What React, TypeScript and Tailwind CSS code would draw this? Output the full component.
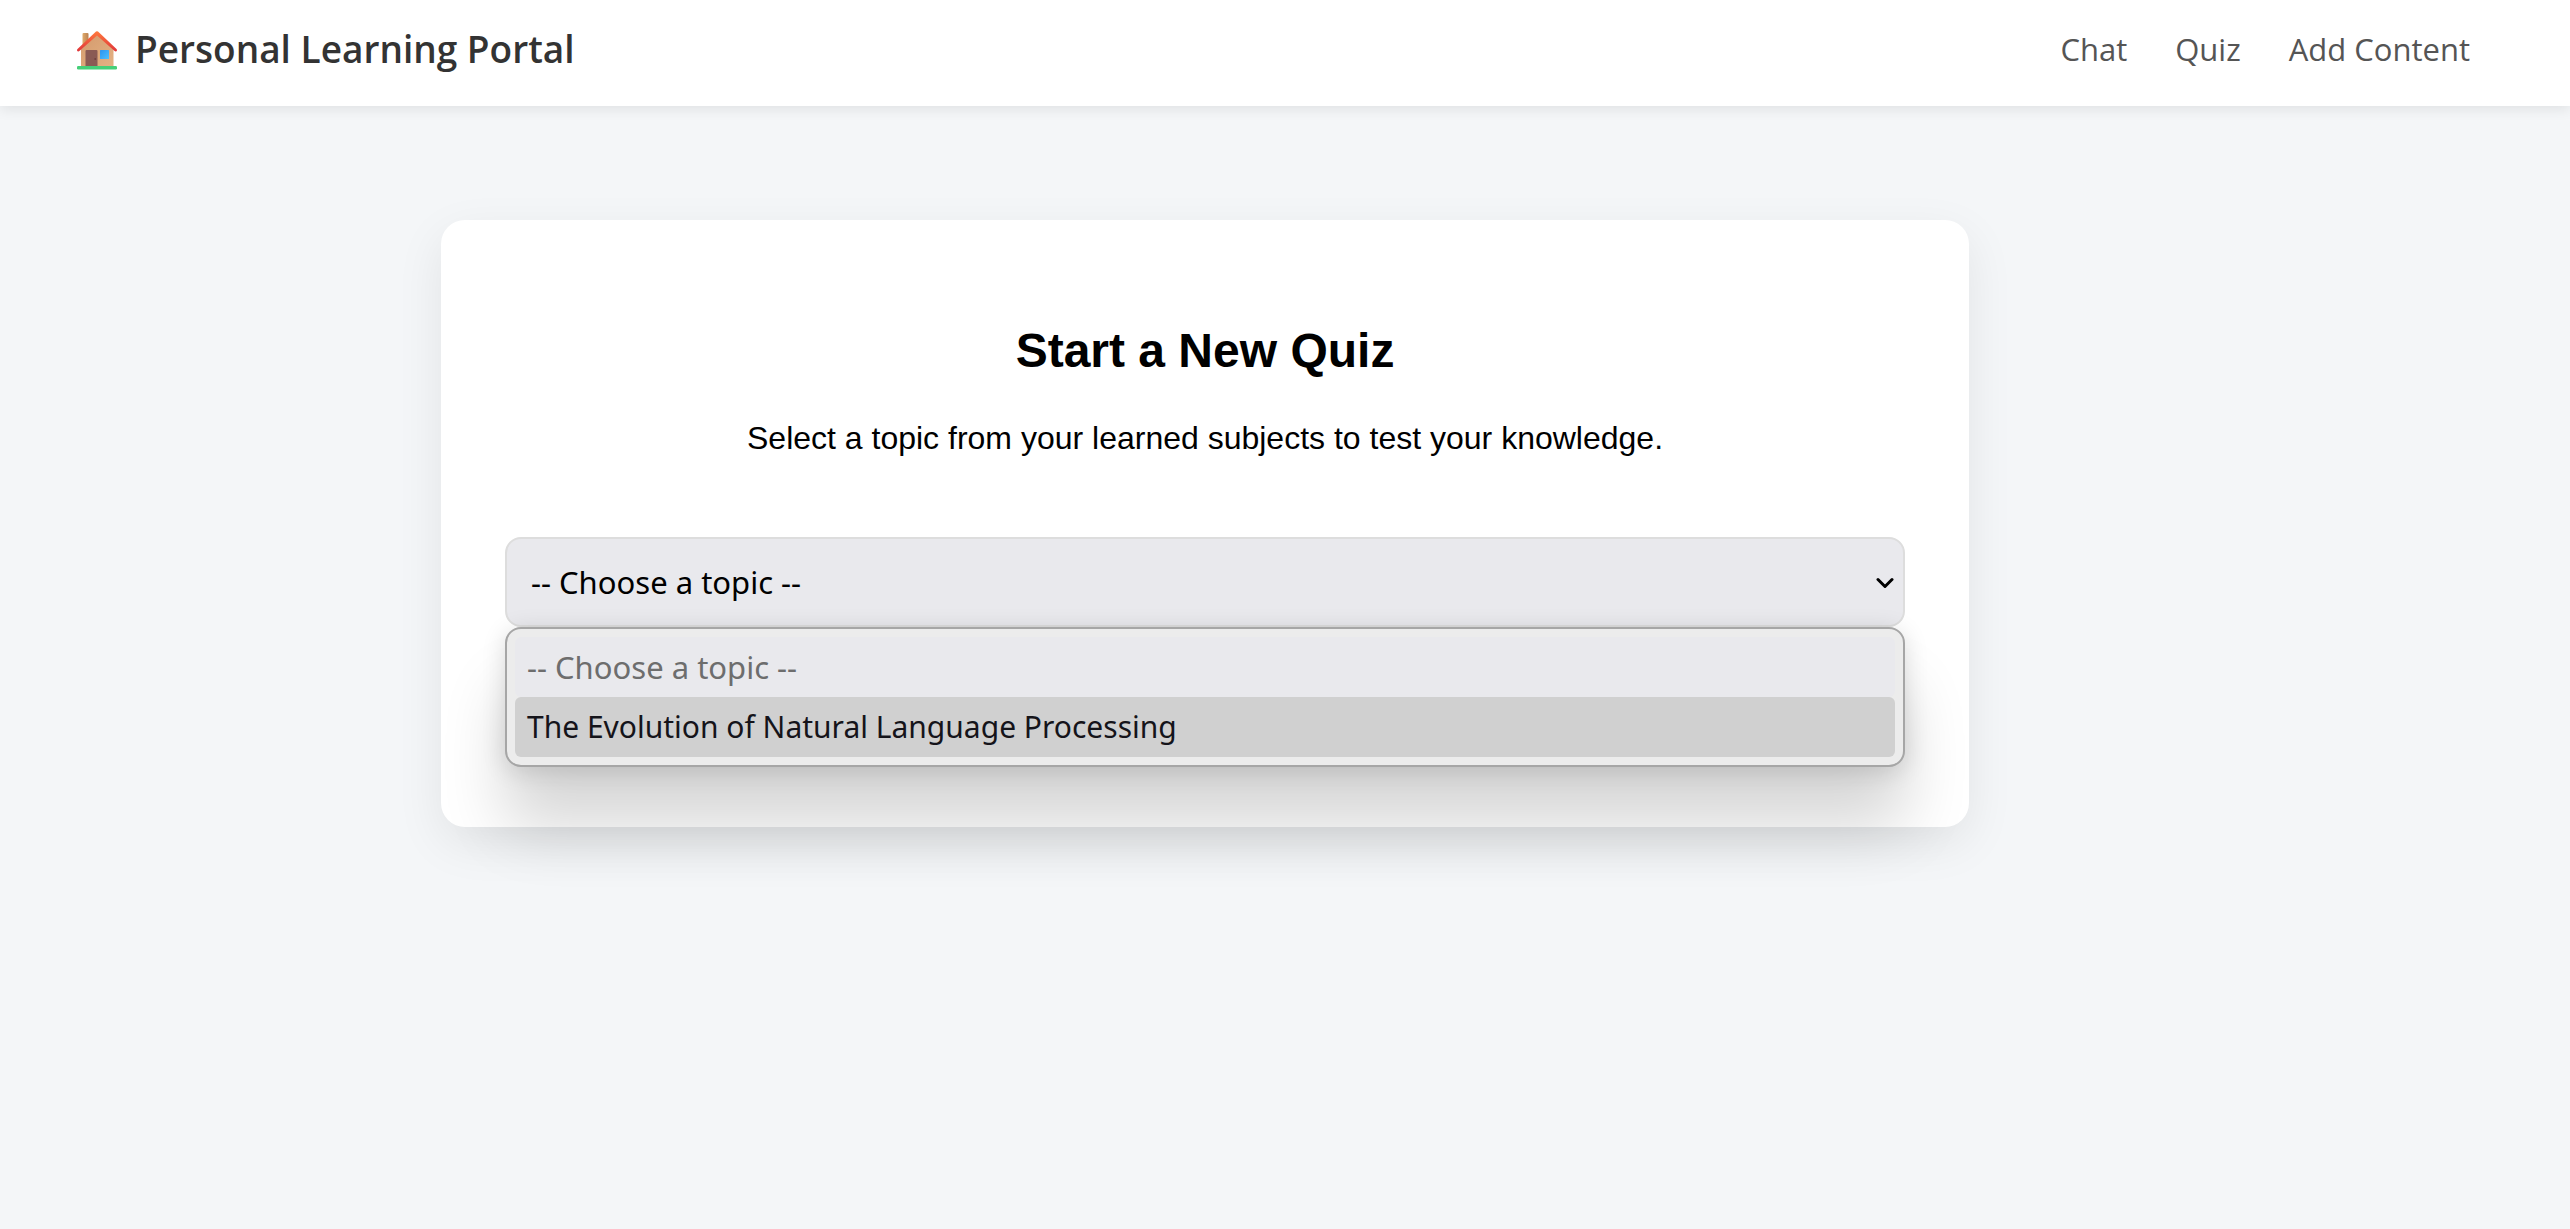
import { useState } from 'react';

const PLACEHOLDER = '-- Choose a topic --';
const TOPICS = ['The Evolution of Natural Language Processing'];
const NAV = ['Chat', 'Quiz', 'Add Content'];

function HouseIcon() {
  return (
    <svg width="40" height="42" viewBox="0 0 40 42" aria-hidden="true" className="shrink-0">
      <defs>
        <linearGradient id="wall" x1="0" y1="0" x2="1" y2="1">
          <stop offset="0" stopColor="#d49a6c" />
          <stop offset="1" stopColor="#e3b184" />
        </linearGradient>
        <linearGradient id="chimney" x1="0" y1="0" x2="1" y2="0">
          <stop offset="0" stopColor="#e0ab6c" />
          <stop offset="1" stopColor="#b98152" />
        </linearGradient>
        <linearGradient id="roof" x1="0" y1="0" x2="0" y2="1">
          <stop offset="0" stopColor="#ff7a3d" />
          <stop offset="1" stopColor="#e0353a" />
        </linearGradient>
        <linearGradient id="pane" x1="0" y1="0" x2="1" y2="1">
          <stop offset="0" stopColor="#2d93ee" />
          <stop offset="1" stopColor="#4cc0ff" />
        </linearGradient>
      </defs>
      <path d="M5.5 6a1 1 0 0 1 1-1h4a1 1 0 0 1 1 1v14h-6z" fill="url(#chimney)" />
      <path d="M4 21 20 6l16.500 15v17.500H4z" fill="url(#wall)" />
      <rect x="8.500" y="22" width="12" height="17" rx="1" fill="#8a5a54" />
      <circle cx="18.200" cy="31" r="0.900" fill="#6b403d" />
      <rect x="23" y="22" width="9" height="9" rx="0.600" fill="url(#pane)" />
      <path
        d="M19 3.600a1.500 1.500 0 0 1 2 0L39.500 21c.700.700.600 1.900-.200 2.300-.500.300-1.200.200-1.700-.200L20 7.600 2.400 23.100c-.500.400-1.200.500-1.700.200-.800-.400-.900-1.600-.200-2.300z"
        fill="url(#roof)"
      />
      <rect x="0" y="38" width="40" height="3.500" rx="1.200" fill="#45cf78" />
    </svg>
  );
}

function Header() {
  return (
    <header className="flex items-center justify-between bg-white pt-6 pr-[100px] pb-8 pl-[77px] font-['Open_Sans',sans-serif] shadow-[0_4px_12px_rgba(0,0,0,0.08)]">
      <h1 className="flex items-center gap-[18px] text-[37px] leading-[50px] font-semibold text-[#333333]">
        <HouseIcon />
        Personal Learning Portal
      </h1>
      <nav className="flex gap-12 text-[31px] leading-[42px] text-[#555555]">
        {NAV.map((label) => (
          <a key={label} href="#">
            {label}
          </a>
        ))}
      </nav>
    </header>
  );
}

function TopicPicker() {
  const [topic, setTopic] = useState('');
  return (
    <div className="relative">
      <select
        aria-label="Quiz topic"
        value={topic}
        onChange={(e) => setTopic(e.target.value)}
        className="block h-[90px] w-full appearance-none rounded-2xl border-2 border-[#dddddd] bg-[#e9e9ed] pr-12 pl-6 font-['Noto_Sans',sans-serif] text-[31px] text-black"
      >
        <option value="">{PLACEHOLDER}</option>
        {TOPICS.map((t) => (
          <option key={t} value={t}>
            {t}
          </option>
        ))}
      </select>
      <svg
        width="18"
        height="12"
        viewBox="0 0 18 12"
        fill="none"
        stroke="#000000"
        strokeWidth="3"
        strokeLinecap="round"
        strokeLinejoin="round"
        aria-hidden="true"
        className="pointer-events-none absolute top-10 right-[11px]"
      >
        <path d="M2 2.500 9 9.500 16 2.500" />
      </svg>
      <ul
        role="listbox"
        aria-label="Topics"
        className="absolute inset-x-0 top-full rounded-2xl border-2 border-[#a6a6a6] bg-[#ececec] p-2 font-['Noto_Sans',sans-serif] shadow-[0_60px_64px_rgba(0,0,0,0.16),0_4px_24px_rgba(0,0,0,0.14)]"
      >
        <li
          role="option"
          aria-selected={topic === ''}
          onClick={() => setTopic('')}
          className="rounded-md bg-[#e9e9ed] px-3 text-[31px] leading-[60px] text-[#6d6d6d]"
        >
          {PLACEHOLDER}
        </li>
        {TOPICS.map((t) => (
          <li
            key={t}
            role="option"
            aria-selected={topic === t}
            onClick={() => setTopic(t)}
            className="rounded-md bg-[#d0d0d0] px-3 text-[30px] leading-[60px] text-[#15141a]"
          >
            {t}
          </li>
        ))}
      </ul>
    </div>
  );
}

export default function App() {
  return (
    <div className="min-h-screen bg-[#f4f6f8] font-['Liberation_Sans',Arial,sans-serif] text-black">
      <Header />
      <main className="pt-[114px] pr-[160px]">
        <section className="mx-auto max-w-[1528px] rounded-3xl bg-white px-16 pt-[103px] pb-[200px] shadow-[0_16px_48px_rgba(0,0,0,0.08)]">
          <h2 className="text-center text-5xl leading-[56px] font-bold">Start a New Quiz</h2>
          <p className="mt-10 mb-20 text-center text-[32px] leading-[38px]">
            Select a topic from your learned subjects to test your knowledge.
          </p>
          <TopicPicker />
        </section>
      </main>
    </div>
  );
}
